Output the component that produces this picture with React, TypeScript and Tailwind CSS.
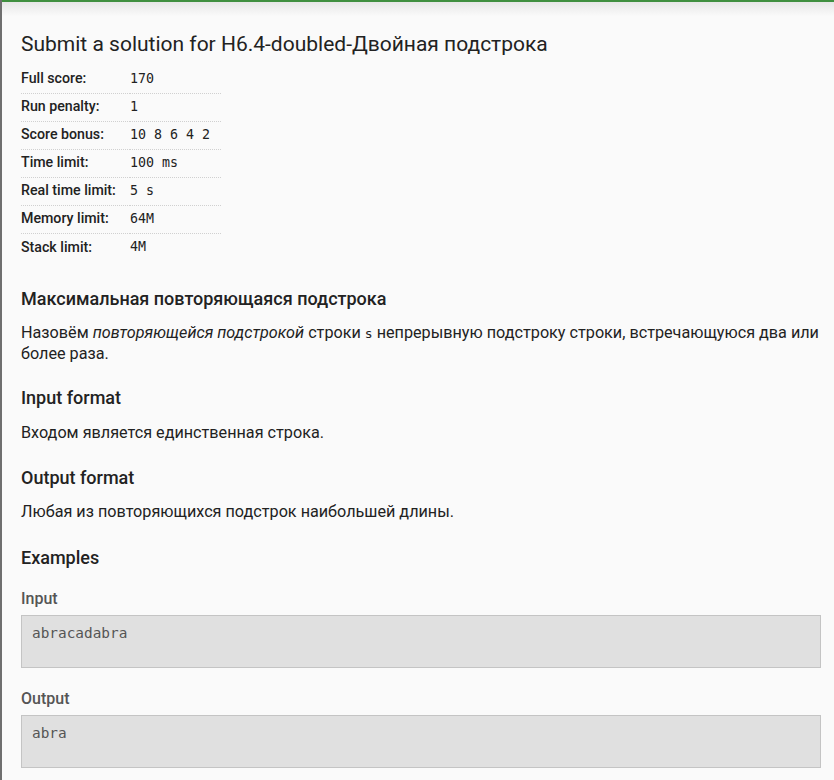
const limits: [string, string][] = [
  ["Full score:", "170"],
  ["Run penalty:", "1"],
  ["Score bonus:", "10 8 6 4 2"],
  ["Time limit:", "100 ms"],
  ["Real time limit:", "5 s"],
  ["Memory limit:", "64M"],
  ["Stack limit:", "4M"],
];

function Example({ title, text }: { title: string; text: string }) {
  return (
    <div>
      <div className="text-[16px] leading-[20px] font-medium text-[#555]">{title}</div>
      <pre className="mt-[6px] h-[53px] border border-[#c4c4c4] bg-[#e0e0e0] px-[10px] pt-[8px] font-['DejaVu_Sans_Mono',monospace] text-[14.4px] leading-[19px] text-[#555]">
        {text}
      </pre>
    </div>
  );
}

export default function App() {
  return (
    <div className="min-h-screen bg-[#fafafa] border-l-2 border-[#6f6f6f] font-['Roboto',sans-serif] text-[#222]">
      <div className="h-[2px] bg-[#3f8f3f]"></div>
      <div className="h-[14px] bg-gradient-to-b from-[#e6e6e6] to-[#fafafa]"></div>

      <div className="pl-[19px] pr-[13px] pt-[14px] pb-10">
        <h1 className="text-[21px] leading-[28px] font-normal">
          Submit a solution for H6.4-doubled-Двойная подстрока
        </h1>

        <table className="mt-[7px] w-[200px] border-collapse">
          <tbody>
            {limits.map(([k, v], i) => (
              <tr
                key={k}
                className={i < limits.length - 1 ? "border-b border-dotted border-[#d0d0d0]" : ""}
              >
                <td className="h-[28px] w-[109px] p-0 text-[14.2px] font-medium whitespace-nowrap">{k}</td>
                <td className="h-[28px] p-0 font-['DejaVu_Sans_Mono',monospace] text-[13.3px] whitespace-pre">{v}</td>
              </tr>
            ))}
          </tbody>
        </table>

        <h3 className="mt-[26px] text-[18px] leading-[24px] font-medium">
          Максимальная повторяющаяся подстрока
        </h3>
        <p className="mt-[12px] text-[16.2px] leading-[20px]">
          Назовём <i>повторяющейся подстрокой</i> строки{" "}
          <span className="font-['DejaVu_Sans_Mono',monospace] text-[13px]">s</span> непрерывную подстроку
          строки, встречающуюся два или более раза.
        </p>

        <h3 className="mt-[22px] text-[18px] leading-[24px] font-medium">Input format</h3>
        <p className="mt-[13px] text-[16.2px] leading-[20px]">Входом является единственная строка.</p>

        <h3 className="mt-[23px] text-[18px] leading-[24px] font-medium">Output format</h3>
        <p className="mt-[12px] text-[16.2px] leading-[20px]">Любая из повторяющихся подстрок наибольшей длины.</p>

        <h3 className="mt-[24px] text-[18px] leading-[24px] font-medium">Examples</h3>
        <div className="mt-[19px]">
          <Example title="Input" text="abracadabra" />
        </div>
        <div className="mt-[21px]">
          <Example title="Output" text="abra" />
        </div>
      </div>
    </div>
  );
}
